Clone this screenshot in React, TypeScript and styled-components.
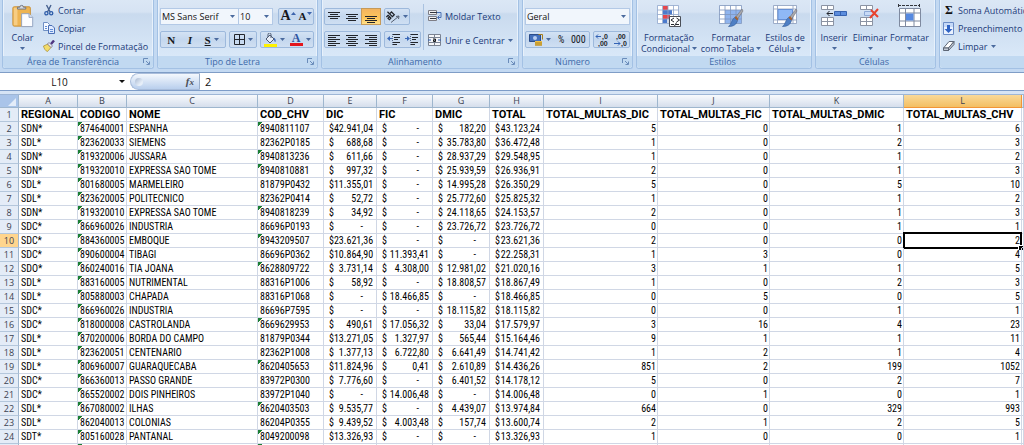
import React from "react";
import styled, { createGlobalStyle, css } from "styled-components";

const ui = `"Open Sans", "Noto Sans", sans-serif`;
const grid = `"Roboto Condensed", Roboto, "Liberation Sans", sans-serif`;

const GlobalStyle = createGlobalStyle`
  * { box-sizing: border-box; }
  body { margin: 0; background: #fff; }
  button, input, select { font: inherit; color: inherit; }
  button { border: 0; padding: 0; background: none; cursor: pointer; }
`;

const Page = styled.div`
  height: 100vh;
  overflow: hidden;
  font-family: ${ui};
  font-size: 9px;
  color: #1b3a78;
`;

/* ---------- ribbon ---------- */

const Ribbon = styled.header`
  display: flex;
  gap: 3px;
  padding: 0 0 3px 2px;
  background: #c3d9f2;
  border-bottom: 1px solid #7f9dc6;
  overflow: hidden;
`;

const Group = styled.section<{ $w?: number }>`
  flex: ${(p) => (p.$w ? `0 0 ${p.$w}px` : "1 0 80px")};
  display: flex;
  flex-direction: column;
  border: 1px solid #a3c1e4;
  border-top: 0;
  border-radius: 0 0 3px 3px;
  box-shadow: inset 1px 0 0 #e8f1fb, inset -1px 0 0 #e8f1fb;
  background: linear-gradient(#dbe7f5 0, #d6e3f3 12px, #c9daee 14px, #d9e8f8 56px);
`;

const GroupBody = styled.div`
  display: flex;
  height: 56px;
`;

const GroupFoot = styled.footer`
  display: flex;
  align-items: center;
  height: 12px;
  padding-right: 3px;
  background: #c1d9f1;
  color: #3e6aaa;
  line-height: 12px;
  border-radius: 0 0 3px 3px;
`;

const FootText = styled.span`
  flex: 1;
  text-align: center;
`;

const Stack = styled.div<{ $pad?: string }>`
  display: flex;
  flex-direction: column;
  padding: ${(p) => p.$pad ?? "0"};
`;

const BigButton = styled.button<{ $w: number }>`
  width: ${(p) => p.$w}px;
  display: flex;
  flex-direction: column;
  align-items: center;
  padding-top: 4px;
  white-space: nowrap;
  & > svg:first-child { height: 24px; margin-bottom: 4px; }
`;

const Line = styled.span`
  display: flex;
  align-items: center;
  gap: 2px;
  height: 11px;
  line-height: 11px;
`;

const SmallButton = styled.button<{ $h?: number }>`
  display: flex;
  align-items: center;
  gap: 3px;
  height: ${(p) => p.$h ?? 18}px;
  white-space: nowrap;
`;

const ControlRow = styled.div<{ $gap?: number }>`
  display: flex;
  gap: ${(p) => p.$gap ?? 3}px;
  height: 17px;
  margin-bottom: 6px;
`;

const Cluster = styled.div<{ $w: number }>`
  display: flex;
  height: 17px;
  width: ${(p) => p.$w}px;
  border: 1px solid #9db9dc;
  border-radius: 2px;
  background: linear-gradient(#d3e2f4, #c4d7ee 50%, #cfdff2);
`;

const Tool = styled.button<{ $on?: boolean }>`
  flex: 1 1 auto;
  display: flex;
  align-items: center;
  justify-content: center;
  gap: 3px;
  color: #16181d;
  ${(p) =>
    p.$on &&
    css`
      background: linear-gradient(#f3b45f, #fdc65c 60%, #ffe08a);
      box-shadow: 0 0 0 1px #c59a5a;
    `}
`;

const Glyph = styled.span<{ $size?: number; $look?: "bold" | "italic" | "under" }>`
  font-family: "Liberation Serif", serif;
  font-weight: 700;
  font-style: ${(p) => (p.$look === "italic" ? "italic" : "normal")};
  text-decoration: ${(p) => (p.$look === "under" ? "underline" : "none")};
  font-size: ${(p) => p.$size ?? 11}px;
  line-height: 14px;
`;

const SizeTool = styled(Tool)`
  gap: 0;
  align-items: flex-start;
  svg { margin-top: 3px; }
`;

const Digits = styled.span`
  font-family: ${grid};
  font-size: 10px;
  line-height: 14px;
`;

const Combo = styled.div<{ $w: number }>`
  display: flex;
  align-items: center;
  width: ${(p) => p.$w}px;
  padding-right: 3px;
  border: 1px solid #b3c9e6;
  background: #f1f6fc;
  color: #111;
  & + & { border-left: 0; }
  select {
    flex: 1;
    min-width: 0;
    height: 15px;
    padding: 0 0 0 1px;
    border: 0;
    background: transparent;
    appearance: none;
    outline: 0;
  }
`;

const Rule = styled.div`
  width: 1px;
  height: 46px;
  margin: 4px 4px 0 2px;
  background: #a9c2e0;
`;

/* ---------- formula bar ---------- */

const FormulaBar = styled.div`
  display: flex;
  height: 18px;
  background: #fff;
  border-bottom: 1px solid #7d9cc8;
  color: #111;
`;

const NameBox = styled.div`
  display: flex;
  align-items: center;
  width: 130px;
  padding-right: 5px;
  input {
    flex: 1;
    min-width: 0;
    border: 0;
    outline: 0;
    padding: 0;
    text-align: center;
    font-size: 10px;
    line-height: 16px;
    background: transparent;
  }
  button { display: flex; }
`;

const FxZone = styled.div`
  display: flex;
  align-items: center;
  justify-content: space-between;
  width: 70px;
  padding: 0 5px 0 4px;
  border: 1px solid #a9bddb;
  border-right-color: #9aaeca;
  border-radius: 9px 0 0 9px;
  background: linear-gradient(#f4f8fd, #b9cfed);
`;

const Knob = styled.span`
  width: 8px;
  height: 8px;
  border-radius: 4px;
  background: linear-gradient(135deg, #a9b9d2, #e6eef8 70%);
`;

const Fx = styled.button`
  font: italic 700 11px/14px "Liberation Serif", serif;
  color: #4b4f59;
  small { font-size: 9px; }
`;

const FormulaInput = styled.input`
  && { font-size: 11px; }
  flex: 1;
  min-width: 0;
  border: 0;
  outline: 0;
  padding: 0 5px;
`;

const Gap = styled.div`
  height: 4px;
  background: #d6e4f5;
  border-bottom: 1px solid #9eb6d6;
`;

/* ---------- sheet ---------- */

const Sheet = styled.table`
  width: 100%;
  table-layout: fixed;
  border-collapse: separate;
  border-spacing: 0;
  font-family: ${grid};
  font-size: 10px;
  line-height: 12px;
  color: #000;
`;

const ColHead = styled.th<{ $on?: boolean }>`
  height: 13px;
  padding: 0;
  font: 400 9px/12px ${ui};
  color: #3c4250;
  border-right: 1px solid #9eb6ce;
  border-bottom: 1px solid #9eb6ce;
  background: linear-gradient(#f8fafd, #d5deec);
  ${(p) =>
    p.$on &&
    css`
      background: linear-gradient(#f9d999, #f3bf62);
      border-color: #f29536;
    `}
`;

const Corner = styled(ColHead)`
  background: #a9c4e9;
  svg { display: block; margin: 1px 2px 0 auto; }
`;

const RowHead = styled.th<{ $on?: boolean }>`
  height: 14px;
  padding: 0;
  font: 400 9px/13px ${ui};
  color: #3c4250;
  border-right: 1px solid #9eb6ce;
  border-bottom: 1px solid #b4c7dc;
  background: ${(p) => (p.$on ? "#ffd58d" : "#e4ecf7")};
`;

const Cell = styled.td<{ $right?: boolean; $bold?: boolean; $flag?: boolean; $active?: boolean; $money?: boolean }>`
  position: relative;
  height: 14px;
  padding: ${(p) => (p.$money ? "1px 3px 0 5px" : p.$right ? "1px 1px 0 0" : "1px 0 0 2px")};
  text-align: ${(p) => (p.$right ? "right" : "left")};
  white-space: nowrap;
  border-right: 1px solid #d0d7e5;
  border-bottom: 1px solid #d0d7e5;
  ${(p) =>
    p.$bold &&
    css`
      font-family: Roboto, sans-serif;
      font-size: 11px;
      font-weight: 700;
    `}
  ${(p) =>
    p.$flag &&
    css`
      background: linear-gradient(135deg, #1b7f35 3px, transparent 3px) no-repeat;
    `}
  ${(p) =>
    p.$active &&
    css`
      &::before {
        content: "";
        position: absolute;
        inset: -2px -1px -2px -1px;
        border: 2px solid #000;
      }
      &::after {
        content: "";
        position: absolute;
        right: -2px;
        bottom: -3px;
        width: 4px;
        height: 4px;
        background: #000;
        border: solid #fff;
        border-width: 1px 0 0 1px;
      }
    `}
`;

const Money = styled.span`
  display: flex;
  justify-content: space-between;
`;

const Nil = styled.span`
  padding-right: 10px;
`;

/* ---------- icons ---------- */

const Arrow = ({ c = "#4a6a9e", w = 5 }: { c?: string; w?: number }) => (
  <svg width={w} height={3} viewBox="0 0 5 3" aria-hidden preserveAspectRatio="none">
    <path d="M0 0h5L2.5 3z" fill={c} />
  </svg>
);

const UpArrow = () => (
  <svg width="5" height="3" viewBox="0 0 5 3" aria-hidden>
    <path d="M0 3h5L2.500 0z" fill="#3c64ad" />
  </svg>
);

const Launcher = () => (
  <svg width="7" height="7" viewBox="0 0 7 7" aria-hidden fill="none" stroke="#6a8cba">
    <path d="M.5 5V.5H5M3 3l3 3M6.500 3.500v3h-3" />
  </svg>
);

const PasteIcon = () => (
  <svg width="24" height="24" viewBox="0 0 24 26" aria-hidden>
    <rect x="1" y="3" width="19" height="21" rx="1.500" fill="#eeb452" stroke="#c98f35" />
    <path d="M2 4h4v19H2z" fill="#f7cd83" />
    <path d="M6 5.500h9V3.500h-2.500a2 2 0 0 0-4 0H6z" fill="#d5d9e0" stroke="#6b7280" />
    <path d="M10.500 10.500h8l4 4v10h-12z" fill="#fbfcff" stroke="#8e9fbe" />
    <path d="M18.500 10.500v4h4" fill="#dbe4f3" stroke="#8e9fbe" />
  </svg>
);

const CutIcon = () => (
  <svg width="12" height="12" viewBox="0 0 12 12" aria-hidden fill="none">
    <path d="M3.500 1l3.700 7M8 1L4.500 8" stroke="#46618f" strokeWidth="1.400" />
    <circle cx="3.400" cy="9.300" r="1.600" stroke="#2c5ba8" strokeWidth="1.300" />
    <circle cx="8.200" cy="9.300" r="1.600" stroke="#2c5ba8" strokeWidth="1.300" />
  </svg>
);

const CopyIcon = () => (
  <svg width="12" height="12" viewBox="0 0 12 12" aria-hidden>
    <path d="M.5.500h4l2 2v6h-6z" fill="#f5f9ff" stroke="#6f8fc4" />
    <path d="M5.500 3.500h3.500l2.500 2.500v5.500h-6z" fill="#dfeaff" stroke="#4a6fb5" />
    <path d="M7 7.500h3M7 9.500h3M2 4.500h2M2 6.500h2" stroke="#5f8bd6" />
  </svg>
);

const BrushIcon = () => (
  <svg width="12" height="12" viewBox="0 0 12 12" aria-hidden>
    <path d="M.5 6l4.500-2 3 3.500-3.500 4C2.500 11 1 8.500.5 6z" fill="#f3dc6c" stroke="#a88b2a" strokeWidth=".7" />
    <path d="M4.500 4L6 2.500l3.500 3.500L8 7.500z" fill="#efeff5" stroke="#665a7a" strokeWidth=".7" />
    <path d="M8 4l3-3.500" stroke="#4f3580" strokeWidth="2.400" />
  </svg>
);

const Bars = ({ rows, x = "left" }: { rows: number[][]; x?: string }) => (
  <svg width="12" height="12" viewBox="0 0 12 12" aria-hidden stroke="#22252b">
    {rows.map(([y, w]) => {
      const start = x === "left" ? 0 : x === "right" ? 12 - w : (12 - w) / 2;
      return <path key={y} d={`M${start} ${y}.5h${w}`} />;
    })}
  </svg>
);

const IndentIcon = ({ flip }: { flip?: boolean }) => (
  <svg width="13" height="11" viewBox="0 0 13 11" aria-hidden>
    <path d="M5 .5h8M7 3.500h6M7 5.500h4M5 8.500h8M5 10.500h5" stroke="#22252b" />
    <path d={flip ? "M0 4h2V2l3 2.500L2 7V5H0z" : "M5 4H3V2L0 4.500 3 7V5h2z"} fill="#3a68b8" />
    <path d="M5.500 0v11" stroke="#5c6c88" strokeDasharray="1 1" />
  </svg>
);

const OrientIcon = () => (
  <svg width="14" height="13" viewBox="0 0 14 13" aria-hidden fill="none" stroke="#1f2229">
    <g transform="rotate(-45 5 6)" strokeWidth="1.200">
      <path d="M3.500 3v5M1 3.500h2.500M3.500 7.500H1.200V5.500h2.300" />
      <path d="M5.500.500v7h2.700V3.500H5.500" />
    </g>
    <path d="M5 12.500l7.500-6M13 6l-3 .5M13 6l-.5 3" stroke="#555f70" />
  </svg>
);

const BorderIcon = () => (
  <svg width="11" height="11" viewBox="0 0 11 11" aria-hidden fill="none" stroke="#23262d">
    <path d="M.5.500h10v10H.5zM5.500.500v10M.5 5.500h10" />
  </svg>
);

const BucketIcon = () => (
  <svg width="13" height="14" viewBox="0 0 13 14" aria-hidden>
    <path d="M2 6l4-4 4 4-4 4z" fill="#e7edf7" stroke="#4d5a72" />
    <path d="M4 4V1.500a1.500 1.500 0 0 1 3 0V5" fill="none" stroke="#4d5a72" />
    <path d="M9.500 4.500c2 .5 2.500 2.500 2 4.500-1 0-1.500-1.500-1.500-3z" fill="#3a66b4" />
    <path d="M0 11h13v3H0z" fill="#fff200" />
  </svg>
);

const FontColorBar = styled.span`
  display: block;
  width: 13px;
  height: 13px;
  border-bottom: 3px solid #e3161d;
  text-align: center;
  font: 700 12px/10px "Liberation Serif", serif;
  color: #2b52a0;
`;

const WrapIcon = () => (
  <svg width="14" height="12" viewBox="0 0 14 12" aria-hidden fill="none">
    <path d="M.5.500h8v4h-8zM.5 6.500h8v4h-8z" fill="#f1f1f1" stroke="#7e7e86" />
    <path d="M2 2.500h10M2 8.500h6" stroke="#33363d" />
    <path d="M9 2.500h4v5h-3M11.500 5.500l-2 2 2 2" stroke="#4a71b4" />
  </svg>
);

const MergeIcon = () => (
  <svg width="14" height="12" viewBox="0 0 14 12" aria-hidden>
    <path d="M.5.500h12v11H.5zM.5 3.500h12M.5 8.500h12M6.500.500v3M6.500 8.500v3" fill="#f4f6fa" stroke="#7b8392" />
    <path d="M0 6h3M10 6h3" stroke="#2d5cae" />
    <path d="M5 5h2.500v2.500H5.500V6H8" stroke="#15171b" fill="none" />
  </svg>
);

const MoneyIcon = () => (
  <svg width="14" height="13" viewBox="0 0 14 13" aria-hidden>
    <path d="M.5 1.500h11v7H.5z" fill="#4470bb" stroke="#2b4c8a" />
    <circle cx="6" cy="5" r="2" fill="#b8cdf0" />
    <path d="M6 8h7v4.500H6z" fill="#ecc14c" />
    <path d="M6 10h7M6 12h7M9.500 1.500h4v5" stroke="#a87f1d" fill="none" />
  </svg>
);

const DecimalIcon = ({ more }: { more?: boolean }) => (
  <svg width="15" height="14" viewBox="0 0 15 14" aria-hidden>
    <g fontFamily="Liberation Sans" fontWeight="700" fontSize="7" fill="#22252b">
      <text x={more ? 7 : 3} y="6">{more ? ",0" : ",00"}</text>
      <text x={more ? 3 : 8} y="13">{more ? ",00" : ",0"}</text>
    </g>
    <path d={more ? "M6 3.500H1M3 1.500l-2 2 2 2" : "M1 10.500h6M5 8.500l2 2-2 2"} stroke="#3463b5" fill="none" />
  </svg>
);

const Brush = () => (
  <g>
    <path d="M24 5l-7 9 2 2 6-9z" fill="#a9a9ad" stroke="#6f6f76" strokeWidth=".6" />
    <path d="M16.500 13.500l3 3c-1 4-4 6-9 6 3-2 3-7 6-9z" fill="#4f7fc4" stroke="#335a97" strokeWidth=".6" />
    <path d="M16.500 13.500l3 3 1-1.500-2.500-3z" fill="#a9642e" />
  </g>
);

const CondIcon = () => (
  <svg width="26" height="24" viewBox="0 0 26 24" aria-hidden>
    <path d="M1.500 1.500h21v18h-21z" fill="#fff" />
    <path d="M7 2h5v4H7zM7 11h7v4H7z" fill="#e6464b" />
    <path d="M7 6h9v5H7zM7 15h4v4H7z" fill="#4c7bcc" />
    <path d="M1.500 1.500h21v18h-21zM1.500 6h21M1.500 10.500h21M1.500 15h21M6.500 1.500v18M12 1.500v18M17.500 1.500v18" fill="none" stroke="#8fa6cc" strokeWidth=".8" />
    <path d="M13.500 12.500h11v10h-11z" fill="#fff" stroke="#4b4f58" />
    <path d="M18 14l-3 2 3 2M20.500 14l3 2-3 2M15 20.500h3M20 20.500h3M20.500 18.500l-2 3.500" fill="none" stroke="#23262d" />
  </svg>
);

const TableIcon = () => (
  <svg width="26" height="24" viewBox="0 0 26 24" aria-hidden>
    <path d="M1.500 1.500h22v18h-22z" fill="#fff" />
    <path d="M7 6h16.500v13.500H7z" fill="#8fb4ee" />
    <path d="M1.500 1.500h22v18h-22zM1.500 6h22M1.500 10.500h22M1.500 15h22M7 1.500v18M12.500 1.500v18M18 1.500v18" fill="none" stroke="#7f96bd" strokeWidth=".8" />
    <Brush />
  </svg>
);

const StyleIcon = () => (
  <svg width="26" height="24" viewBox="0 0 26 24" aria-hidden>
    <path d="M1.500 1.500h23v18h-23z" fill="#fff" stroke="#8a9cbd" strokeWidth=".8" />
    <path d="M1.500 5h23M1.500 16h23M5.500 1.500v18M21 1.500v18" fill="none" stroke="#8a9cbd" strokeWidth=".8" />
    <path d="M6 5.500h14.500v10H6z" fill="#8fb8f5" stroke="#6690d6" />
    <Brush />
  </svg>
);

const InsertIcon = () => (
  <svg width="26" height="24" viewBox="0 0 26 24" aria-hidden>
    <path d="M.5 1.500h12v4H.5zM6.500 1.500v4M.5 13.500h12v8H.5zM6.500 13.500v8M.5 17.500h12" fill="#fff" stroke="#8b93a3" />
    <path d="M13.500 7.500h12v4h-12zM19.500 7.500v4" fill="#5c8ddd" stroke="#3763b0" />
    <path d="M12 9.500H6M8.500 7L6 9.500 8.500 12" fill="none" stroke="#23262d" />
  </svg>
);

const DeleteIcon = () => (
  <svg width="26" height="24" viewBox="0 0 26 24" aria-hidden>
    <path d="M3.500 1.500h12v4h-12zM9.500 1.500v4M3.500 13.500h12v8h-12zM9.500 13.500v8M3.500 17.500h12" fill="#fff" stroke="#8b93a3" />
    <path d="M7.500 7.500h9v4h-9z" fill="#c9dbf6" stroke="#8da9d6" />
    <path d="M14 6l7 7M21 5l-8 9" stroke="#e8432e" strokeWidth="2" />
  </svg>
);

const FormatIcon = () => (
  <svg width="26" height="24" viewBox="0 0 26 24" aria-hidden>
    <path d="M2.500 4.500h21v18h-21zM2.500 9h21M2.500 17h21M8.500 4.500v18M17 4.500v18" fill="#fff" stroke="#7f8aa0" />
    <path d="M9 9.500h7.500v7H9z" fill="#5689e0" />
    <path d="M1 1.500h22M1.500 0v3M22.500 0v3" stroke="#33363d" strokeDasharray="3 1" fill="none" />
  </svg>
);

const FillIcon = () => (
  <svg width="12" height="13" viewBox="0 0 12 13" aria-hidden>
    <path d="M.5.500h10v12H.5z" fill="#eaf2ff" stroke="#6b8cc6" />
    <path d="M1 1h9v4H1z" fill="#c5d9f8" />
    <path d="M4 3h3v4h2.500l-4 4-4-4H4z" fill="#2f63c4" />
  </svg>
);

const ClearIcon = () => (
  <svg width="12" height="12" viewBox="0 0 12 12" aria-hidden>
    <path d="M.5 8L6 1.500h5L5.500 8z" fill="#fff" stroke="#5d6675" />
    <path d="M.5 8h5v2.500h-5zM5.500 8L11 1.500v3l-5.500 6z" fill="#c3cad6" stroke="#5d6675" />
  </svg>
);

const SumIcon = styled.span`
  width: 12px;
  text-align: center;
  font: 700 12px/14px "Liberation Serif", serif;
  color: #111;
`;

/* ---------- data ---------- */

const columns = [
  ["A", 59], ["B", 49], ["C", 131], ["D", 66], ["E", 53], ["F", 56], ["G", 57],
  ["H", 54], ["I", 114], ["J", 112], ["K", 134], ["L", 118],
] as const;

const titles = ["REGIONAL", "CODIGO", "NOME", "COD_CHV", "DIC", "FIC", "DMIC", "TOTAL",
  "TOTAL_MULTAS_DIC", "TOTAL_MULTAS_FIC", "TOTAL_MULTAS_DMIC", "TOTAL_MULTAS_CHV"];

const data = `SDN*|874640001|ESPANHA|8940811107|42.941,04|-|182,20|43.123,24|5|0|1|6
SDL*|823620033|SIEMENS|82362P0185|688,68|-|35.783,80|36.472,48|1|0|2|3
SDN*|819320006|JUSSARA|8940813236|611,66|-|28.937,29|29.548,95|1|0|1|2
SDN*|819320010|EXPRESSA SAO TOME|8940810881|997,32|-|25.939,59|26.936,91|2|0|1|3
SDL*|801680005|MARMELEIRO|81879P0432|11.355,01|-|14.995,28|26.350,29|5|0|5|10
SDL*|823620005|POLITECNICO|82362P0414|52,72|-|25.772,60|25.825,32|1|0|1|2
SDN*|819320010|EXPRESSA SAO TOME|8940818239|34,92|-|24.118,65|24.153,57|2|0|1|3
SDC*|866960026|INDUSTRIA|86696P0193|-|-|23.726,72|23.726,72|0|0|1|1
SDC*|884360005|EMBOQUE|8943209507|23.621,36|-|-|23.621,36|2|0|0|2
SDC*|890600004|TIBAGI|86696P0362|10.864,90|11.393,41|-|22.258,31|1|3|0|4
SDO*|860240016|TIA JOANA|8628809722|3.731,14|4.308,00|12.981,02|21.020,16|3|1|1|5
SDL*|883160005|NUTRIMENTAL|88316P1006|58,92|-|18.808,57|18.867,49|1|0|2|3
SDL*|805880003|CHAPADA|88316P1068|-|18.466,85|-|18.466,85|0|5|0|5
SDC*|866960026|INDUSTRIA|86696P7595|-|-|18.115,82|18.115,82|0|0|1|1
SDC*|818000008|CASTROLANDA|8669629953|490,61|17.056,32|33,04|17.579,97|3|16|4|23
SDL*|870200006|BORDA DO CAMPO|81879P0344|13.271,05|1.327,97|565,44|15.164,46|9|1|1|11
SDL*|823620051|CENTENARIO|82362P1008|1.377,13|6.722,80|6.641,49|14.741,42|1|2|1|4
SDL*|806960007|GUARAQUECABA|8620405653|11.824,96|0,41|2.610,89|14.436,26|851|2|199|1052
SDC*|866360013|PASSO GRANDE|83972P0300|7.776,60|-|6.401,52|14.178,12|5|0|2|7
SDC*|865520002|DOIS PINHEIROS|83972P1040|-|14.006,48|-|14.006,48|0|1|0|1
SDL*|867080002|ILHAS|8620403503|9.535,77|-|4.439,07|13.974,84|664|0|329|993
SDL*|862040013|COLONIAS|86204P0355|9.439,52|4.003,48|157,74|13.600,74|2|1|2|5
SDT*|805160028|PANTANAL|8049200098|13.326,93|-|-|13.326,93|1|0|0|1`
  .split("\n")
  .map((line) => line.split("|"));

const ACTIVE_ROW = 10;
const ACTIVE_COL = 11;

function DataCell({ row, col, value }: { row: number; col: number; value: string }) {
  if (col >= 4 && col <= 7) {
    return (
      <Cell $money>
        <Money>
          <span>$</span>
          {value === "-" ? <Nil>-</Nil> : <span>{value}</span>}
        </Money>
      </Cell>
    );
  }
  const flagged = col === 1 || (col === 3 && !value.includes("P"));
  return (
    <Cell $right={col > 7} $flag={flagged} $active={row === ACTIVE_ROW && col === ACTIVE_COL}>
      {value}
    </Cell>
  );
}

function Foot({ children, launcher }: { children?: React.ReactNode; launcher?: boolean }) {
  return (
    <GroupFoot>
      <FootText>{children}</FootText>
      {launcher && <button aria-label={`Opções de ${children}`}><Launcher /></button>}
    </GroupFoot>
  );
}

export default function App() {
  return (
    <Page>
      <GlobalStyle />
      <Ribbon>
        <Group $w={152}>
          <GroupBody>
            <BigButton $w={39}>
              <PasteIcon />
              <Line>Colar</Line>
              <Line><Arrow /></Line>
            </BigButton>
            <Stack $pad="1px 0 0 1px">
              <SmallButton><CutIcon />Cortar</SmallButton>
              <SmallButton><CopyIcon />Copiar</SmallButton>
              <SmallButton><BrushIcon />Pincel de Formatação</SmallButton>
            </Stack>
          </GroupBody>
          <Foot launcher>Área de Transferência</Foot>
        </Group>

        <Group $w={161}>
          <GroupBody>
            <Stack $pad="8px 0 0 2px">
              <ControlRow $gap={0}>
                <Combo $w={79}>
                  <select aria-label="Tipo de letra"><option>MS Sans Serif</option></select>
                  <Arrow />
                </Combo>
                <Combo $w={34}>
                  <select aria-label="Tamanho"><option>10</option></select>
                  <Arrow />
                </Combo>
                <Stack $pad="0 0 0 5px">
                  <Cluster $w={36}>
                    <SizeTool aria-label="Aumentar"><Glyph $size={14}>A</Glyph><UpArrow /></SizeTool>
                    <SizeTool aria-label="Diminuir"><Glyph>A</Glyph><Arrow c="#3c64ad" /></SizeTool>
                  </Cluster>
                </Stack>
              </ControlRow>
              <ControlRow>
                <Cluster $w={66}>
                  <Tool><Glyph $look="bold">N</Glyph></Tool>
                  <Tool><Glyph $look="italic">I</Glyph></Tool>
                  <Tool><Glyph $look="under">S</Glyph><Arrow /></Tool>
                </Cluster>
                <Cluster $w={28}>
                  <Tool aria-label="Limites"><BorderIcon /><Arrow /></Tool>
                </Cluster>
                <Cluster $w={54}>
                  <Tool aria-label="Cor de preenchimento"><BucketIcon /><Arrow /></Tool>
                  <Tool aria-label="Cor do tipo de letra"><FontColorBar>A</FontColorBar><Arrow /></Tool>
                </Cluster>
              </ControlRow>
            </Stack>
          </GroupBody>
          <Foot launcher>Tipo de Letra</Foot>
        </Group>

        <Group $w={198}>
          <GroupBody>
            <Stack $pad="8px 0 0 2px">
              <ControlRow>
                <Cluster $w={57}>
                  <Tool aria-label="Alinhar acima"><Bars rows={[[1, 12], [3, 8], [5, 12], [7, 8]]} x="mid" /></Tool>
                  <Tool aria-label="Alinhar ao meio"><Bars rows={[[3, 12], [5, 8], [7, 12], [9, 8]]} x="mid" /></Tool>
                  <Tool $on aria-label="Alinhar abaixo"><Bars rows={[[5, 12], [7, 8], [9, 12], [11, 8]]} x="mid" /></Tool>
                </Cluster>
                <Cluster $w={26}>
                  <Tool aria-label="Orientação"><OrientIcon /><Arrow /></Tool>
                </Cluster>
              </ControlRow>
              <ControlRow>
                <Cluster $w={57}>
                  <Tool aria-label="Esquerda"><Bars rows={[[1, 12], [3, 8], [5, 12], [7, 8], [9, 12], [11, 8]]} /></Tool>
                  <Tool aria-label="Centro"><Bars rows={[[1, 12], [3, 8], [5, 12], [7, 8], [9, 12], [11, 8]]} x="mid" /></Tool>
                  <Tool aria-label="Direita"><Bars rows={[[1, 12], [3, 8], [5, 12], [7, 8], [9, 12], [11, 8]]} x="right" /></Tool>
                </Cluster>
                <Cluster $w={37}>
                  <Tool aria-label="Diminuir avanço"><IndentIcon /></Tool>
                  <Tool aria-label="Aumentar avanço"><IndentIcon flip /></Tool>
                </Cluster>
              </ControlRow>
            </Stack>
            <Rule />
            <Stack $pad="4px 0 0 0">
              <SmallButton $h={24}><WrapIcon />Moldar Texto</SmallButton>
              <SmallButton $h={24}><MergeIcon />Unir e Centrar<Arrow /></SmallButton>
            </Stack>
          </GroupBody>
          <Foot launcher>Alinhamento</Foot>
        </Group>

        <Group $w={111}>
          <GroupBody>
            <Stack $pad="8px 0 0 2px">
              <ControlRow>
                <Combo $w={105}>
                  <select aria-label="Formato de número"><option>Geral</option></select>
                  <Arrow />
                </Combo>
              </ControlRow>
              <ControlRow>
                <Cluster $w={65}>
                  <Tool aria-label="Moeda"><MoneyIcon /><Arrow /></Tool>
                  <Tool><Digits>%</Digits></Tool>
                  <Tool><Digits>000</Digits></Tool>
                </Cluster>
                <Cluster $w={37}>
                  <Tool aria-label="Aumentar casas decimais"><DecimalIcon more /></Tool>
                  <Tool aria-label="Diminuir casas decimais"><DecimalIcon /></Tool>
                </Cluster>
              </ControlRow>
            </Stack>
          </GroupBody>
          <Foot launcher>Número</Foot>
        </Group>

        <Group $w={176}>
          <GroupBody>
            <BigButton $w={64}>
              <CondIcon />
              <Line>Formatação</Line>
              <Line>Condicional<Arrow /></Line>
            </BigButton>
            <BigButton $w={60}>
              <TableIcon />
              <Line>Formatar</Line>
              <Line>como Tabela<Arrow /></Line>
            </BigButton>
            <BigButton $w={48}>
              <StyleIcon />
              <Line>Estilos de</Line>
              <Line>Célula<Arrow /></Line>
            </BigButton>
          </GroupBody>
          <Foot>Estilos</Foot>
        </Group>

        <Group $w={121}>
          <GroupBody>
            <BigButton $w={36}>
              <InsertIcon />
              <Line>Inserir</Line>
              <Line><Arrow /></Line>
            </BigButton>
            <BigButton $w={36}>
              <DeleteIcon />
              <Line>Eliminar</Line>
              <Line><Arrow /></Line>
            </BigButton>
            <BigButton $w={43}>
              <FormatIcon />
              <Line>Formatar</Line>
              <Line><Arrow /></Line>
            </BigButton>
          </GroupBody>
          <Foot>Células</Foot>
        </Group>

        <Group>
          <GroupBody>
            <Stack $pad="1px 0 0 3px">
              <SmallButton><SumIcon>Σ</SumIcon>Soma Automática</SmallButton>
              <SmallButton><FillIcon />Preenchimento</SmallButton>
              <SmallButton><ClearIcon />Limpar<Arrow /></SmallButton>
            </Stack>
          </GroupBody>
          <Foot />
        </Group>
      </Ribbon>

      <FormulaBar>
        <NameBox>
          <input aria-label="Caixa de nome" defaultValue="L10" />
          <button aria-label="Nomes"><Arrow c="#111" w={6} /></button>
        </NameBox>
        <FxZone>
          <Knob />
          <Fx aria-label="Inserir função">f<small>x</small></Fx>
        </FxZone>
        <FormulaInput aria-label="Fórmula" defaultValue="2" />
      </FormulaBar>
      <Gap />

      <Sheet>
        <colgroup>
          <col style={{ width: 19 }} />
          {columns.map(([name, w]) => <col key={name} style={{ width: w }} />)}
          <col />
        </colgroup>
        <thead>
          <tr>
            <Corner aria-label="Selecionar tudo">
              <svg width="8" height="8" viewBox="0 0 8 8" aria-hidden><path d="M8 0v8H0z" fill="#e4edf9" /></svg>
            </Corner>
            {columns.map(([name], i) => (
              <ColHead key={name} scope="col" $on={i === ACTIVE_COL}>{name}</ColHead>
            ))}
            <ColHead />
          </tr>
        </thead>
        <tbody>
          <tr>
            <RowHead scope="row">1</RowHead>
            {titles.map((t) => <Cell key={t} $bold>{t}</Cell>)}
            <Cell />
          </tr>
          {data.map((cells, r) => (
            <tr key={r}>
              <RowHead scope="row" $on={r + 2 === ACTIVE_ROW}>{r + 2}</RowHead>
              {cells.map((v, c) => <DataCell key={c} row={r + 2} col={c} value={v} />)}
              <Cell />
            </tr>
          ))}
          <tr>
            <RowHead />
            {columns.map(([name]) => <Cell key={name} $flag={name === "B" || name === "D"} />)}
            <Cell />
          </tr>
        </tbody>
      </Sheet>
    </Page>
  );
}
